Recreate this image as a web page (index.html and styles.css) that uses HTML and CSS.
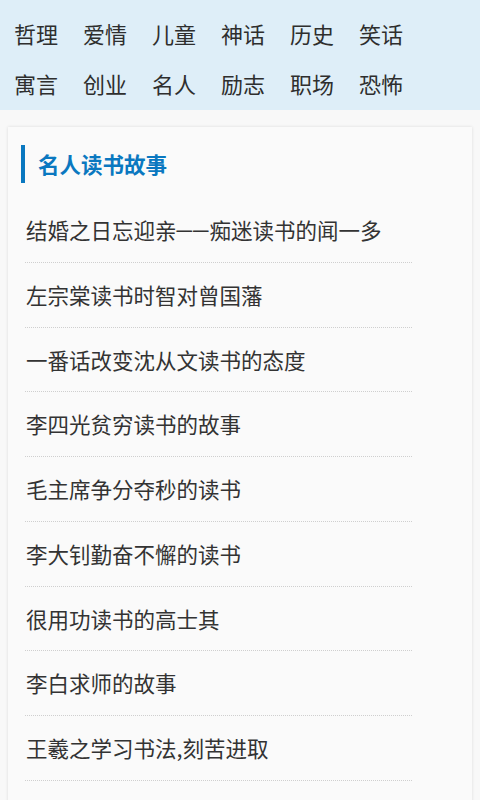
FILE: index.html
```html
<!DOCTYPE html>
<html lang="zh-CN">
<head>
<meta charset="utf-8">
<title>名人读书故事</title>
<link rel="stylesheet" href="styles.css">
</head>
<body>
<nav class="tabs">
  <div class="tab-row">
    <span class="tab">哲理</span><span class="tab">爱情</span><span class="tab">儿童</span><span class="tab">神话</span><span class="tab">历史</span><span class="tab">笑话</span>
  </div>
  <div class="tab-row">
    <span class="tab">寓言</span><span class="tab">创业</span><span class="tab">名人</span><span class="tab">励志</span><span class="tab">职场</span><span class="tab">恐怖</span>
  </div>
</nav>
<main class="card">
  <h1 class="title">名人读书故事</h1>
  <ul class="list">
    <li class="item">结婚之日忘迎亲<span class="dash">－－</span>痴迷读书的闻一多</li>
    <li class="item">左宗棠读书时智对曾国藩</li>
    <li class="item">一番话改变沈从文读书的态度</li>
    <li class="item">李四光贫穷读书的故事</li>
    <li class="item">毛主席争分夺秒的读书</li>
    <li class="item">李大钊勤奋不懈的读书</li>
    <li class="item">很用功读书的高士其</li>
    <li class="item">李白求师的故事</li>
    <li class="item">王羲之学习书法,刻苦进取</li>
    <li class="item">诸葛亮勤奋求学的故事</li>
  </ul>
</main>
</body>
</html>
```
FILE: styles.css
```css
html, body {
  margin: 0;
  padding: 0;
}
body {
  background: #f8f8f8;
  font-family: "Noto Sans CJK SC", "Noto Sans", sans-serif;
  color: #333;
  height: 800px;
  overflow: hidden;
}
.tabs {
  background: #deeef8;
  padding: 8px 0 2px 14px;
  height: 100px;
}
.tab-row {
  display: flex;
  height: 50px;
  align-items: center;
}
.tab {
  width: 69px;
  font-size: 22px;
  line-height: 50px;
  color: #2e2e2e;
}
.card {
  margin: 17px 8px 0 8px;
  background: #fafafa;
  box-shadow: 0 0 3px rgba(0, 0, 0, 0.12);
  padding: 18px 0 0 13px;
  min-height: 700px;
}
.title {
  margin: 0;
  border-left: 4px solid #0a78c0;
  padding-left: 13px;
  height: 38px;
  line-height: 38px;
  font-size: 21.5px;
  font-weight: bold;
  color: #0a78c0;
}
.list {
  list-style: none;
  margin: 15px 0 0 4px;
  padding: 0;
  width: 387px;
}
.item {
  height: 63.75px;
  line-height: 63.75px;
  border-bottom: 1px dotted #cfcfcf;
  font-size: 21.5px;
  color: #333;
  padding-left: 1px;
  white-space: nowrap;
}
.dash {
  letter-spacing: -5px;
  margin-left: -3px;
  padding-right: 3px;
}
```
